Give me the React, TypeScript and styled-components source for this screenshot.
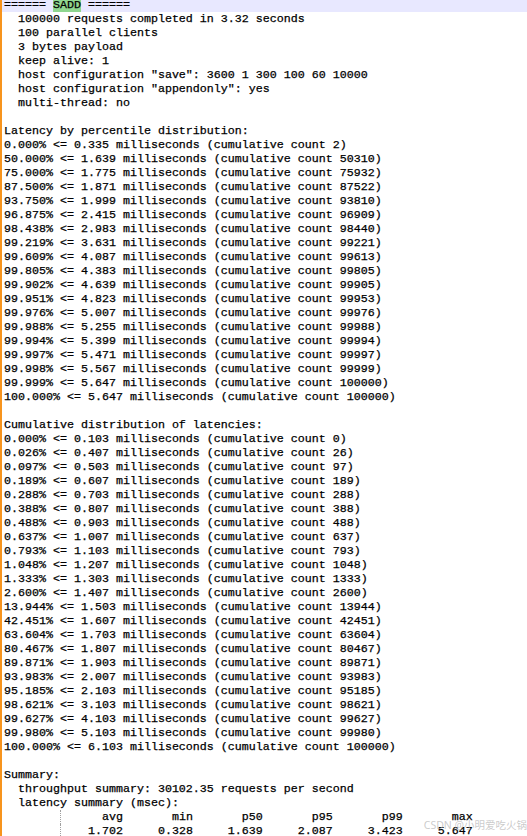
import React from "react"
import styled, { createGlobalStyle } from "styled-components"

const GlobalStyle = createGlobalStyle`
    html, body {
        margin: 0;
        padding: 0;
        background: #ffffff;
    }
`

const Editor = styled.div`
    position: relative;
    width: 527px;
    height: 836px;
    overflow: hidden;
    background: #ffffff;
`

const TextArea = styled.div`
    display: flex;
    flex-direction: column;
    margin-top: -2px;
    border-left: 2px solid #f7941d;
    min-height: 850px;
`

const Line = styled.div<{ $current?: boolean }>`
    height: 14px;
    line-height: 14px;
    padding-left: 2px;
    white-space: pre;
    font-family: "Liberation Mono", "Courier New", monospace;
    font-size: 11.667px;
    color: #000000;
    -webkit-text-stroke: 0.25px #000000;
    background: ${p => (p.$current ? "#e8e8ff" : "transparent")};
`

const Match = styled.span`
    background: #8fd68f;
`

const Guide = styled.span`
    display: inline-block;
    width: 0;
    height: 14px;
    vertical-align: top;
    border-left: 1px dotted #a0a0a0;
    margin-right: -1px;
`

const Watermark = styled.div`
    position: absolute;
    right: 0;
    bottom: 4px;
    font-family: "Noto Sans", "Noto Sans CJK SC", sans-serif;
    font-size: 10.5px;
    color: rgba(180, 180, 180, 0.7);
    white-space: nowrap;
`

const header = [
    "  100000 requests completed in 3.32 seconds",
    "  100 parallel clients",
    "  3 bytes payload",
    "  keep alive: 1",
    "  host configuration \"save\": 3600 1 300 100 60 10000",
    "  host configuration \"appendonly\": yes",
    "  multi-thread: no",
    "",
]

const percentiles: [string, string, string][] = [
    ["0.000", "0.335", "2"],
    ["50.000", "1.639", "50310"],
    ["75.000", "1.775", "75932"],
    ["87.500", "1.871", "87522"],
    ["93.750", "1.999", "93810"],
    ["96.875", "2.415", "96909"],
    ["98.438", "2.983", "98440"],
    ["99.219", "3.631", "99221"],
    ["99.609", "4.087", "99613"],
    ["99.805", "4.383", "99805"],
    ["99.902", "4.639", "99905"],
    ["99.951", "4.823", "99953"],
    ["99.976", "5.007", "99976"],
    ["99.988", "5.255", "99988"],
    ["99.994", "5.399", "99994"],
    ["99.997", "5.471", "99997"],
    ["99.998", "5.567", "99999"],
    ["99.999", "5.647", "100000"],
    ["100.000", "5.647", "100000"],
]

const cumulative: [string, string, string][] = [
    ["0.000", "0.103", "0"],
    ["0.026", "0.407", "26"],
    ["0.097", "0.503", "97"],
    ["0.189", "0.607", "189"],
    ["0.288", "0.703", "288"],
    ["0.388", "0.807", "388"],
    ["0.488", "0.903", "488"],
    ["0.637", "1.007", "637"],
    ["0.793", "1.103", "793"],
    ["1.048", "1.207", "1048"],
    ["1.333", "1.303", "1333"],
    ["2.600", "1.407", "2600"],
    ["13.944", "1.503", "13944"],
    ["42.451", "1.607", "42451"],
    ["63.604", "1.703", "63604"],
    ["80.467", "1.807", "80467"],
    ["89.871", "1.903", "89871"],
    ["93.983", "2.007", "93983"],
    ["95.185", "2.103", "95185"],
    ["98.621", "3.103", "98621"],
    ["99.627", "4.103", "99627"],
    ["99.980", "5.103", "99980"],
    ["100.000", "6.103", "100000"],
]

const fmt = ([pct, ms, count]: [string, string, string]) =>
    `${pct}% <= ${ms} milliseconds (cumulative count ${count})`

const pad = (s: string) => s.padStart(9, " ")

const tableHead = ["avg", "min", "p50", "p95", "p99", "max"]
const tableRow = ["1.702", "0.328", "1.639", "2.087", "3.423", "5.647"]

export default function App() {
    return (
        <Editor>
            <GlobalStyle />
            <TextArea>
                <Line $current>====== <Match>SADD</Match> ======</Line>
                {header.map((text, i) => (
                    <Line key={"h" + i}>{text}</Line>
                ))}
                <Line>Latency by percentile distribution:</Line>
                {percentiles.map(row => (
                    <Line key={"p" + row[0]}>{fmt(row)}</Line>
                ))}
                <Line />
                <Line>Cumulative distribution of latencies:</Line>
                {cumulative.map(row => (
                    <Line key={"c" + row[0]}>{fmt(row)}</Line>
                ))}
                <Line />
                <Line>Summary:</Line>
                <Line>  throughput summary: 30102.35 requests per second</Line>
                <Line>  latency summary (msec):</Line>
                <Line>
                    {"        "}<Guide />{"    " + tableHead.map(pad).join(" ").slice(4)}
                </Line>
                <Line>
                    {"        "}<Guide />{"    " + tableRow.map(pad).join(" ").slice(4)}
                </Line>
            </TextArea>
            <Watermark>CSDN @小明爱吃火锅</Watermark>
        </Editor>
    )
}
